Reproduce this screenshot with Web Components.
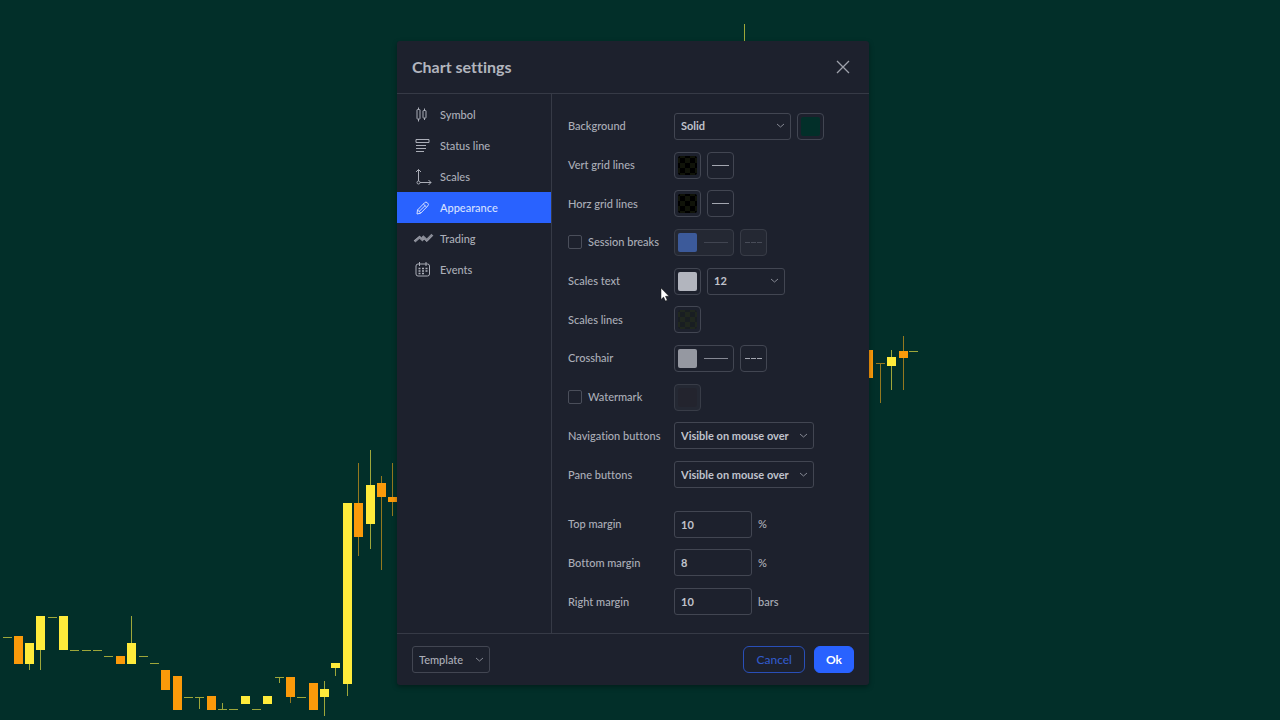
<!DOCTYPE html>
<html lang="en">
<head>
<meta charset="utf-8">
<title>Chart settings</title>
<style>
  :root {
    --chart-bg: #022f29;
    --panel: #1d212d;
    --line: #363a46;
    --field-line: #424652;
    --text: #abaeb8;
    --strong: #c0c3cc;
    --blue: #2962ff;
  }

  body {
    margin: 0;
    font: 500 11px/16px Lato, "Open Sans", sans-serif;
    font-variant-ligatures: none;
    color: var(--text);
    background: var(--chart-bg);
  }
</style>
</head>
<body>
<chart-page>
  <candle-chart slot="chart"></candle-chart>
  <settings-dialog heading="Chart settings">
    <tab-item slot="tabs" icon="symbol">Symbol</tab-item>
    <tab-item slot="tabs" icon="status">Status line</tab-item>
    <tab-item slot="tabs" icon="scales">Scales</tab-item>
    <tab-item slot="tabs" icon="pencil" selected>Appearance</tab-item>
    <tab-item slot="tabs" icon="trading">Trading</tab-item>
    <tab-item slot="tabs" icon="events">Events</tab-item>

    <setting-select label="Background" options="Solid|Gradient" size="wide">
      <color-button label="Background color" color="#022f29"></color-button>
    </setting-select>
    <setting-row label="Vert grid lines">
      <color-button label="Vert grid color" color="#000" checker="#101309"></color-button>
      <line-button label="Vert grid style"></line-button>
    </setting-row>
    <setting-row label="Horz grid lines">
      <color-button label="Horz grid color" color="#000" checker="#101309"></color-button>
      <line-button label="Horz grid style"></line-button>
    </setting-row>
    <setting-check label="Session breaks">
      <color-button label="Session breaks color" color="#3c5a9a" stroke disabled></color-button>
      <line-button label="Session breaks style" dashed disabled></line-button>
    </setting-check>
    <setting-select label="Scales text" options="12|10|11|14|16">
      <color-button slot="before" label="Scales text color" color="#b2b5be"></color-button>
    </setting-select>
    <setting-row label="Scales lines">
      <color-button label="Scales lines color" color="#191e22" checker="#20271f"></color-button>
    </setting-row>
    <setting-row label="Crosshair">
      <color-button label="Crosshair color" color="#9598a1" stroke></color-button>
      <line-button label="Crosshair style" dashed></line-button>
    </setting-row>
    <setting-check label="Watermark">
      <color-button label="Watermark color" color="#23242e" disabled></color-button>
    </setting-check>
    <setting-select label="Navigation buttons" options="Visible on mouse over|Always visible|Always invisible" size="full"></setting-select>
    <setting-select label="Pane buttons" options="Visible on mouse over|Always visible|Always invisible" size="full"></setting-select>
    <setting-number label="Top margin" value="10" unit="%" first></setting-number>
    <setting-number label="Bottom margin" value="8" unit="%"></setting-number>
    <setting-number label="Right margin" value="10" unit="bars"></setting-number>

    <drop-down slot="footer" label="Template" options="Template|Apply defaults|Save as" quiet></drop-down>
    <push-button slot="actions">Cancel</push-button>
    <push-button slot="actions" primary>Ok</push-button>
  </settings-dialog>
</chart-page>

<script>
const ICONS = {
  symbol: `<path d="M4.500 1.500v2M4.500 13v2.500M10.500 2.500v2M10.500 12v2"/><rect x="3" y="3.500" width="3" height="9.500" rx=".5"/><rect x="9" y="4.500" width="3" height="7.500" rx=".5"/>`,
  status: `<path d="M2 2.500h13v3H2zM2 8.500h10M2 11.500h10M2 14.500h8"/>`,
  scales: `<path d="M4.500 13V1.500M2 4l2.500-2.500L7 4M6 14.500h11M14.500 12l2.500 2.500-2.500 2.500"/><circle cx="4.500" cy="14.500" r="1.500"/>`,
  pencil: `<path d="M3 15l.5-4 7-7.200a2 2 0 0 1 2.900 0l.3.300a2 2 0 0 1 0 2.900l-7 7.200zM3.500 11l3.500 3.200M9.300 5l3.300 3.200M5 12.600l6.300-6.200"/>`,
  trading: `<g stroke-width="2.500" opacity=".75"><path d="M.500 11.500l5-4.200 3.800 3.200"/><path d="M8.500 6.200l4.300 4 5.500-5.500"/></g><path opacity=".6" d="M0 11l5.500-4.700 4.500 3.700M8 6.800l4.800 4.700 6-6"/>`,
  events: `<rect x="2" y="3" width="13.500" height="12" rx="2"/><path d="M5.500 1v4M12 1v4"/><path stroke-width="1.500" stroke-dasharray="2 1.500" d="M4.500 7.500h9M4.500 10h9M4.500 12.500h6"/>`,
};

// x, body top, body bottom, high, low, rising
const CANDLES = [
  [8, 637, 637, 637, 637, 1], [19, 636, 664, 636, 664, 0], [30, 643, 664, 643, 670, 1],
  [41, 616, 650, 616, 670, 1], [53, 617, 617, 617, 617, 1], [64, 616, 650, 616, 650, 1],
  [75, 650, 650, 650, 650, 1], [87, 650, 650, 650, 650, 1], [98, 650, 650, 650, 650, 1],
  [109, 656, 656, 656, 656, 1], [121, 656, 664, 656, 664, 0], [132, 643, 664, 616, 664, 1],
  [144, 656, 656, 656, 656, 1], [155, 663, 663, 663, 663, 1], [166, 670, 690, 670, 690, 0],
  [178, 676, 710, 676, 710, 0], [189, 697, 697, 697, 697, 1], [200, 697, 697, 697, 709, 1],
  [212, 696, 710, 696, 710, 0], [223, 709, 709, 703, 709, 1], [234, 709, 709, 709, 709, 1],
  [246, 696, 704, 696, 704, 1], [257, 709, 709, 709, 709, 1], [268, 696, 704, 696, 704, 1],
  [280, 677, 677, 677, 683, 1], [291, 677, 697, 677, 703, 0], [302, 697, 697, 697, 697, 1],
  [314, 683, 710, 683, 710, 0], [325, 689, 697, 681, 716, 1], [336, 663, 668, 663, 676, 1],
  [348, 503, 684, 503, 696, 1], [359, 503, 537, 463, 556, 0], [371, 485, 524, 450, 549, 1],
  [382, 483, 497, 476, 570, 0], [393, 497, 502, 463, 516, 0], [745, 60, 80, 24, 90, 1],
  [869, 350, 378, 350, 378, 0], [881, 363, 363, 363, 403, 0], [892, 357, 366, 350, 390, 1],
  [904, 351, 358, 336, 390, 0], [914, 351, 351, 351, 351, 1],
];

const FIELD_CSS = `
  *, *::before { box-sizing: border-box; }
  button, input, select { font: inherit; font-variant-ligatures: none; color: inherit; margin: 0; }
  button, select { cursor: pointer; }
`;

class BaseElement extends HTMLElement {
  constructor() {
    super();
    this.attachShadow({ mode: "open" });
  }

  connectedCallback() {
    this.shadowRoot.innerHTML = `<style>${FIELD_CSS}${this.css()}</style>${this.html()}`;
  }

  attr(name) {
    return this.getAttribute(name) || "";
  }
}

class ChartPage extends BaseElement {
  css() {
    return `
      :host { display: block; position: relative; min-height: 100vh; overflow: hidden; }
      ::slotted([slot=chart]) { position: absolute; inset: 0; }
      main {
        position: relative;
        display: flex;
        justify-content: center;
        min-height: 100vh;
        padding: 41px 14px 35px 0;
      }
    `;
  }

  html() {
    return `<slot name="chart"></slot><main><slot></slot></main>`;
  }
}

class CandleChart extends BaseElement {
  css() {
    return `
      :host { display: block; }
      svg { display: block; width: 100%; height: 100%; }
      .up { fill: #ffeb3b; }
      .down { fill: #fb9a0a; }
      .up.thin { fill: #9ea73a; }
      .down.thin { fill: #94781f; }
    `;
  }

  html() {
    const bars = CANDLES.map(([x, top, bottom, high, low, up]) => {
      const kind = up ? "up" : "down";
      const flat = top === bottom;
      const wick = low > high
        ? `<rect class="${kind} thin" x="${x - 1}" y="${high}" width="1" height="${low - high}"/>` : "";
      return `${wick}<rect class="${kind} ${flat ? "thin" : ""}" x="${x - 5}" y="${top}" width="9" height="${flat ? 1 : bottom - top}"/>`;
    });
    return `<svg viewBox="0 0 1280 720" preserveAspectRatio="xMinYMax slice" aria-hidden="true">${bars.join("")}</svg>`;
  }
}

class SettingsDialog extends BaseElement {
  css() {
    return `
      :host {
        position: relative;
        display: flex;
        flex-direction: column;
        width: 472px;
        background: var(--panel);
        border-radius: 3px;
        box-shadow: 0 2px 5px rgba(0, 0, 0, .35);
      }
      header, footer { display: flex; align-items: center; justify-content: space-between; padding: 0 15px; }
      header { height: 53px; border-bottom: 1px solid var(--line); }
      footer { height: 52px; border-top: 1px solid var(--line); }
      h1 { margin: 0; font-size: 16px; line-height: 20px; font-weight: 700; color: #b2b5be; }
      .close { display: flex; padding: 4px; border: 0; background: none; color: #9ea1ab; }
      .body { flex: 1; display: flex; }
      nav { width: 155px; padding-top: 5px; border-right: 1px solid var(--line); }
      .rows { flex: 1; display: flex; flex-direction: column; padding: 13px 16px 12px; }
      .actions { display: flex; gap: 9px; }
      .cursor { position: absolute; left: 263px; top: 246px; }
    `;
  }

  html() {
    return `
      <header>
        <h1>${this.attr("heading")}</h1>
        <button class="close" aria-label="Close">
          <svg width="14" height="14" fill="none" stroke="currentColor" stroke-width="1.300"><path d="M1 1l12 12M13 1L1 13"/></svg>
        </button>
      </header>
      <div class="body">
        <nav><slot name="tabs"></slot></nav>
        <div class="rows"><slot></slot></div>
      </div>
      <footer>
        <slot name="footer"></slot>
        <div class="actions"><slot name="actions"></slot></div>
      </footer>
      <svg class="cursor" width="10" height="16" aria-hidden="true"><path fill="#fff" stroke="#111" stroke-width=".5" d="M1 1v11.500l2.600-2.400 1.800 4 1.900-.8-1.800-4H9z"/></svg>
    `;
  }
}

class TabItem extends BaseElement {
  css() {
    return `
      :host { display: block; }
      button {
        display: flex;
        align-items: center;
        gap: 7px;
        width: 100%;
        height: 31px;
        padding: 0 17px;
        border: 0;
        background: none;
        text-align: left;
      }
      :host([selected]) button { background: var(--blue); color: #d5e0ff; }
      svg { flex: none; }
    `;
  }

  html() {
    return `
      <button>
        <svg width="19" height="18" fill="none" stroke="currentColor" stroke-width="1" overflow="visible">${ICONS[this.attr("icon")]}</svg>
        <slot></slot>
      </button>
    `;
  }
}

class DropDown extends BaseElement {
  css() {
    return `
      :host { display: grid; width: 78px; color: var(--strong); font-weight: 700; }
      :host([size=wide]) { width: 117px; }
      :host([size=full]) { width: 140px; }
      :host([quiet]) { color: var(--text); font-weight: 500; }
      select, svg { grid-area: 1 / 1; }
      select {
        appearance: none;
        width: 100%;
        height: 27px;
        padding: 0 20px 0 6px;
        border: 1px solid var(--field-line);
        border-radius: 3px;
        background: var(--panel);
      }
      svg { place-self: center end; margin-right: 6px; pointer-events: none; }
    `;
  }

  html() {
    const options = this.attr("options").split("|").map((text) => `<option>${text}</option>`);
    return `
      <select aria-label="${this.attr("label")}">${options.join("")}</select>
      <svg width="9" height="6" fill="none" stroke="#858893"><path d="M1 1l3.500 3L8 1"/></svg>
    `;
  }
}

class ColorButton extends BaseElement {
  css() {
    const color = this.attr("color");
    const checker = this.attr("checker") || color;
    return `
      :host { display: block; }
      button {
        display: flex;
        align-items: center;
        gap: 7px;
        height: 27px;
        padding: 3px;
        border: 1px solid var(--field-line);
        border-radius: 4px;
        background: none;
      }
      :host([disabled]) button { background: #242833; border-color: #383c47; }
      i {
        width: 19px;
        height: 19px;
        border-radius: 2px;
        background: repeating-conic-gradient(${checker} 0 25%, ${color} 0 50%) 2px 2px / 10px 10px;
      }
      hr { width: 24px; margin: 0 2px 0 0; border: 0; border-top: 1px solid #858893; }
      :host([disabled]) hr { border-color: #414551; }
    `;
  }

  html() {
    return `
      <button aria-label="${this.attr("label")}" ${this.hasAttribute("disabled") ? "disabled" : ""}>
        <i></i>${this.hasAttribute("stroke") ? "<hr>" : ""}
      </button>
    `;
  }
}

class LineButton extends BaseElement {
  css() {
    return `
      :host { display: block; }
      button {
        display: grid;
        place-items: center;
        width: 27px;
        height: 27px;
        padding: 0;
        border: 1px solid var(--field-line);
        border-radius: 4px;
        background: none;
        color: #a3a6b0;
      }
      :host([disabled]) button { background: #242833; border-color: #383c47; color: #484c58; }
    `;
  }

  html() {
    const dash = this.hasAttribute("dashed") ? `stroke-dasharray="5 1"` : "";
    return `
      <button aria-label="${this.attr("label")}" ${this.hasAttribute("disabled") ? "disabled" : ""}>
        <svg width="17" height="1" stroke="currentColor"><path ${dash} d="M0 .5h17"/></svg>
      </button>
    `;
  }
}

class SettingRow extends BaseElement {
  css() {
    return `
      :host {
        flex: 1;
        display: grid;
        grid-template-columns: 106px 1fr;
        align-items: center;
        min-height: 31px;
      }
      :host([first]) { margin-top: 11px; }
      .fields { display: flex; align-items: center; gap: 6px; }
      label { display: flex; align-items: center; gap: 6px; white-space: nowrap; }
      ${this.extraCss()}
    `;
  }

  extraCss() {
    return "";
  }

  html() {
    return `<span>${this.attr("label")}</span><div class="fields"><slot></slot></div>`;
  }
}

class SettingCheck extends SettingRow {
  extraCss() {
    return `
      input {
        appearance: none;
        width: 14px;
        height: 14px;
        border: 1px solid #4a4e5a;
        border-radius: 2px;
      }
      input:checked { background: var(--blue); }
    `;
  }

  html() {
    return `
      <label><input type="checkbox">${this.attr("label")}</label>
      <div class="fields"><slot></slot></div>
    `;
  }
}

class SettingSelect extends SettingRow {
  html() {
    return `
      <span>${this.attr("label")}</span>
      <div class="fields">
        <slot name="before"></slot>
        <drop-down label="${this.attr("label")}" options="${this.attr("options")}" size="${this.attr("size")}"></drop-down>
        <slot></slot>
      </div>
    `;
  }
}

class SettingNumber extends SettingRow {
  extraCss() {
    return `
      input {
        width: 78px;
        height: 27px;
        padding: 0 6px;
        border: 1px solid var(--field-line);
        border-radius: 3px;
        background: none;
        color: var(--strong);
        font-weight: 700;
      }
    `;
  }

  html() {
    return `
      <label for="value">${this.attr("label")}</label>
      <div class="fields">
        <input id="value" inputmode="numeric" value="${this.attr("value")}">
        <span>${this.attr("unit")}</span>
      </div>
    `;
  }
}

class PushButton extends BaseElement {
  css() {
    return `
      :host { display: block; }
      button {
        height: 27px;
        padding: 0 12px;
        border: 1px solid #294fb8;
        border-radius: 6px;
        background: none;
        color: #3159c8;
        font-size: 12px;
      }
      :host([primary]) button {
        padding: 0 11px;
        background: var(--blue);
        border-color: var(--blue);
        color: #fff;
        font-weight: 700;
      }
    `;
  }

  html() {
    return `<button><slot></slot></button>`;
  }
}

customElements.define("chart-page", ChartPage);
customElements.define("candle-chart", CandleChart);
customElements.define("settings-dialog", SettingsDialog);
customElements.define("tab-item", TabItem);
customElements.define("drop-down", DropDown);
customElements.define("color-button", ColorButton);
customElements.define("line-button", LineButton);
customElements.define("setting-row", SettingRow);
customElements.define("setting-check", SettingCheck);
customElements.define("setting-select", SettingSelect);
customElements.define("setting-number", SettingNumber);
customElements.define("push-button", PushButton);
</script>
</body>
</html>
